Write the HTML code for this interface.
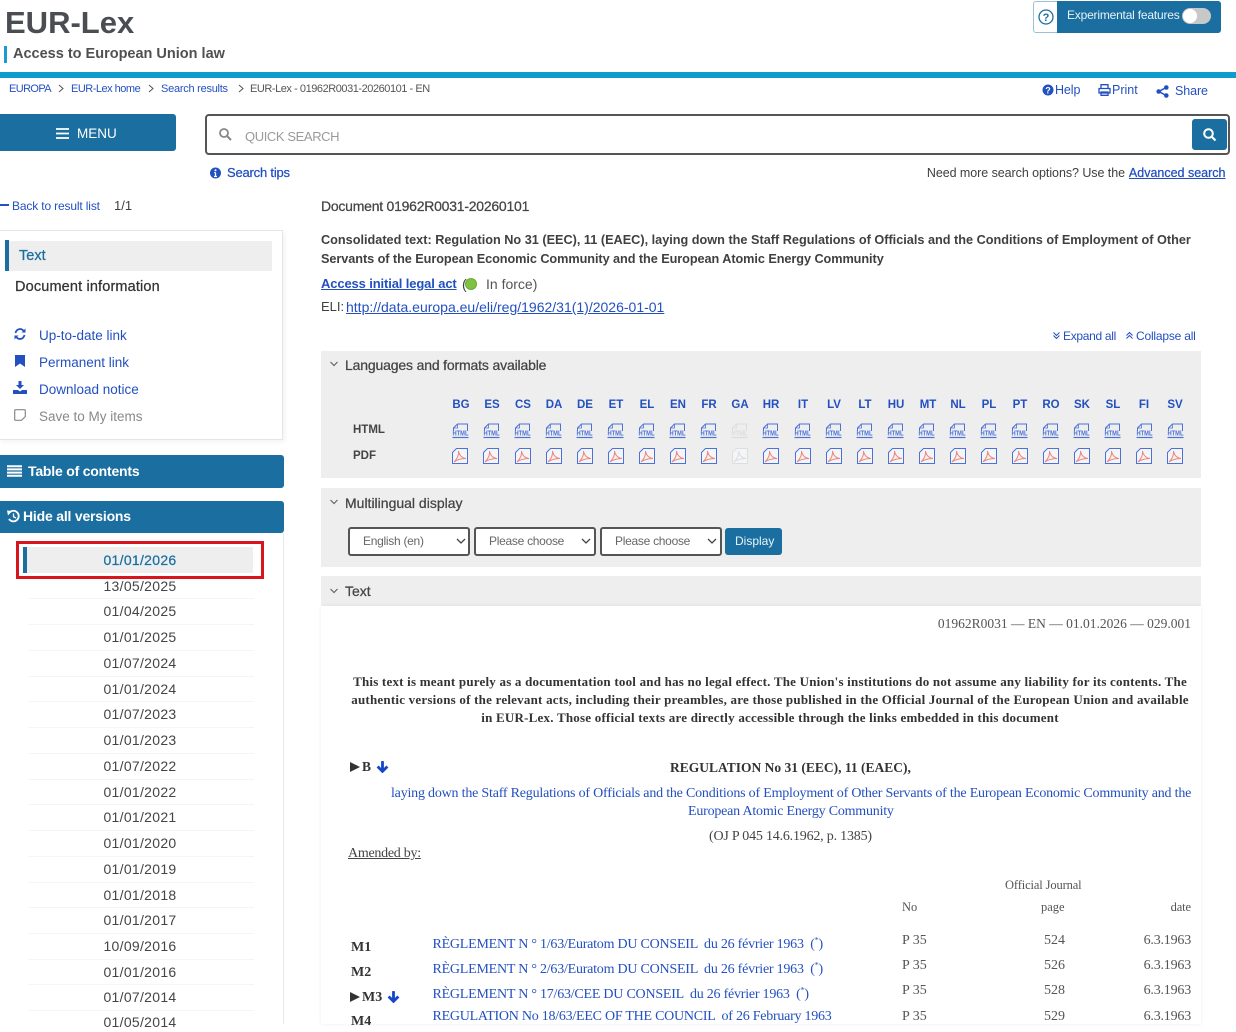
<!DOCTYPE html>
<html lang="en"><head><meta charset="utf-8"><title>EUR-Lex</title>
<style>
html,body{margin:0;padding:0;background:#fff}
body{width:1236px;height:1024px;overflow:hidden;position:relative;font-family:"Liberation Sans",sans-serif;color:#404040;font-size:14px}
.t{position:absolute;white-space:nowrap;line-height:20px}
.l{color:#2350c0}
.u{text-decoration:underline}
.b{font-weight:bold}
.m{-webkit-text-stroke:.25px currentColor}
.s{font-family:"Liberation Serif",serif}
.r{text-align:right}
.c{text-align:center}
.box{position:absolute;box-sizing:border-box}
svg{position:absolute;overflow:visible}
.teal{background:#1a6fa0;border-radius:3px}
.panel{background:#eeeeee;position:absolute;left:321px;width:880px}
.sel{position:absolute;top:527px;height:29px;width:122px;box-sizing:border-box;border:2px solid #555;border-radius:3px;background:#fff;color:#666;font-size:12px;line-height:25px;padding-left:13px;letter-spacing:-.28px}
.lg{position:absolute;top:395px;width:30px;text-align:center;color:#2350c0;font-size:11.5px;font-weight:bold;line-height:20px}
.d{position:absolute;left:27px;width:226px;text-align:center;font-size:14px;line-height:20px;letter-spacing:.3px;color:#444}
.hr{position:absolute;left:28px;width:226px;height:1px;background:#f5f5f5}
.rg{color:#2350c0;font-size:14px;letter-spacing:-.23px;left:432.500px}
.pc{font-size:14px;color:#555}
.dt{right:45px;letter-spacing:-.2px}
</style></head><body>
<svg width="0" height="0" style="position:absolute"><defs>
<symbol id="h" viewBox="0 0 17 16"><path d="M1.500 8V5L5.500 1H15.500V8" fill="none" stroke="currentColor" stroke-width="1"/><path d="M1.500 5H5.500V1" fill="none" stroke="currentColor" stroke-width=".8"/><text x="8.500" y="12.500" text-anchor="middle" font-family="Liberation Sans" font-size="7" font-weight="bold" fill="currentColor" textLength="16" lengthAdjust="spacingAndGlyphs">HTML</text><path d="M0.500 14.500H16.500" stroke="currentColor" stroke-width="1.200"/></symbol>
<symbol id="p" viewBox="0 0 16 16"><path d="M.5 4.500L4.500.5H15.500V15.500H.5Z" fill="#f4f5f8" stroke="currentColor" stroke-width="1"/><path d="M2 14C5 11 7 7 6.500 3C7.500 8 10 10 14 10.500C10 10.500 6 11 2 14Z" fill="none" stroke="var(--pc,#ee8878)" stroke-width="1"/></symbol>
<symbol id="ar" viewBox="0 0 12 12"><path d="M6 1V10M1.500 6L6 10.500L10.500 6" fill="none" stroke="#1448c8" stroke-width="2.600"/></symbol>
</defs></svg>

<div class="t b" style="left:5px;top:2px;font-size:31px;line-height:42px;color:#4a4d52">EUR-Lex</div>
<div class="box" style="left:4px;top:46px;width:3px;height:17px;background:#1c9ad6"></div>
<div class="t b" style="left:13px;top:44px;font-size:14.500px;color:#505050">Access to European Union law</div>
<div class="box" style="left:0;top:72px;width:1236px;height:6px;background:#0e9ccf"></div>

<div class="t l" style="left:9px;top:79px;font-size:11px;letter-spacing:-.6px">EUROPA</div>
<div class="t l" style="left:71px;top:79px;font-size:11px;letter-spacing:-.5px">EUR-Lex home</div>
<div class="t l" style="left:161px;top:79px;font-size:11px;letter-spacing:-.25px">Search results</div>
<div class="t" style="left:250px;top:79px;font-size:11px;color:#555;letter-spacing:-.45px">EUR-Lex - 01962R0031-20260101 - EN</div>
<svg style="left:0;top:0" width="300" height="100"><path d="M59 85L63 88.500L59 92M149 85L153 88.500L149 92M239 85L243 88.500L239 92" fill="none" stroke="#555" stroke-width="1"/></svg>

<!-- experimental -->
<div class="box" style="left:1033px;top:1px;width:188px;height:32px;border:1px solid #9cc0d6;border-radius:3px;background:#fff"></div>
<div class="box teal" style="left:1057px;top:1px;width:164px;height:32px;border-radius:0 3px 3px 0"></div>
<svg style="left:1037px;top:8px" width="18" height="18"><circle cx="9" cy="9" r="7" fill="none" stroke="#1a6fa0" stroke-width="1.300"/><text x="9" y="13" text-anchor="middle" font-size="11" font-weight="bold" fill="#1a6fa0" font-family="Liberation Sans">?</text></svg>
<div class="t" style="left:1067px;top:5px;font-size:12px;color:#e8f2f8;letter-spacing:-.2px">Experimental features</div>
<div class="box" style="left:1182px;top:8px;width:29px;height:16px;border-radius:8px;background:#c8c8c8"></div>
<div class="box" style="left:1183px;top:9px;width:14px;height:14px;border-radius:50%;background:#fff"></div>

<svg style="left:1042px;top:84px" width="12" height="12"><circle cx="6" cy="6" r="5.500" fill="#2350c0"/><text x="6" y="9.500" text-anchor="middle" font-size="9" font-weight="bold" fill="#fff" font-family="Liberation Sans">?</text></svg>
<div class="t l" style="left:1055px;top:80px;font-size:12.500px;letter-spacing:-.1px">Help</div>
<svg style="left:1098px;top:84px" width="13" height="12"><path d="M3 4V.7H10V4M1 4.500H12V9H1ZM3 8H10V11.300H3Z" fill="#fff" stroke="#2350c0" stroke-width="1.300"/></svg>
<div class="t l" style="left:1112px;top:80px;font-size:12.500px">Print</div>
<svg style="left:1156px;top:85px" width="13" height="13"><path d="M10 2.500L3 6.500L10 10.500" fill="none" stroke="#2350c0" stroke-width="1.500"/><circle cx="10.300" cy="2.500" r="2.300" fill="#2350c0"/><circle cx="2.700" cy="6.500" r="2.300" fill="#2350c0"/><circle cx="10.300" cy="10.500" r="2.300" fill="#2350c0"/></svg>
<div class="t l" style="left:1175px;top:81px;font-size:12.500px;letter-spacing:-.1px">Share</div>

<!-- menu & search -->
<div class="box teal" style="left:-4px;top:114px;width:180px;height:37px"></div>
<svg style="left:56px;top:128px" width="13" height="11"><path d="M0 1H13M0 5.500H13M0 10H13" stroke="#fff" stroke-width="1.800"/></svg>
<div class="t" style="left:77px;top:124px;font-size:13.500px;color:#fff">MENU</div>
<div class="box" style="left:205px;top:114px;width:1025px;height:41px;border:2px solid #555;border-radius:4px;background:#fff"></div>
<svg style="left:219px;top:128px" width="13" height="13"><circle cx="5" cy="5" r="4" fill="none" stroke="#888" stroke-width="1.800"/><path d="M8 8L12 12" stroke="#888" stroke-width="2"/></svg>
<div class="t" style="left:245px;top:127px;font-size:13px;color:#9a9a9a;letter-spacing:-.4px">QUICK SEARCH</div>
<div class="box teal" style="left:1192px;top:119px;width:35px;height:31px"></div>
<svg style="left:1203px;top:128px" width="14" height="14"><circle cx="5.500" cy="5.500" r="4.300" fill="none" stroke="#fff" stroke-width="2"/><path d="M8.500 8.500L12.500 12.500" stroke="#fff" stroke-width="2.200"/></svg>

<svg style="left:210px;top:167px" width="12" height="12"><circle cx="5.500" cy="6" r="5.500" fill="#2350c0"/><path d="M5.500 5.500V9.500M4 9.500H7M4.200 5.500H5.500" stroke="#fff" stroke-width="1.300"/><circle cx="5.500" cy="3.300" r="1" fill="#fff"/></svg>
<div class="t l m" style="left:227px;top:163px;font-size:13px;letter-spacing:-.2px">Search tips</div>
<div class="t r" style="right:111px;top:163px;font-size:12.500px;letter-spacing:-.06px">Need more search options? Use the</div>
<div class="t l u m" style="right:10.500px;top:163px;font-size:12.500px">Advanced search</div>

<div class="box" style="left:0;top:204px;width:9px;height:2px;background:#2350c0"></div>
<div class="t l" style="left:12px;top:196px;font-size:12px;letter-spacing:-.15px">Back to result list</div>
<div class="t" style="left:114px;top:196px;font-size:13px">1/1</div>

<!-- left card -->
<div class="box" style="left:-2px;top:230px;width:285px;height:210px;border:1px solid #e6e6e6;box-shadow:2px 2px 5px rgba(0,0,0,.05);background:#fff"></div>
<div class="box" style="left:5px;top:241px;width:267px;height:30px;background:#eeeeee"></div>
<div class="box" style="left:5px;top:240px;width:4px;height:31px;background:#1a6fa0"></div>
<div class="t m" style="left:19px;top:246px;font-size:14.500px;color:#1a6fa0">Text</div>
<div class="t m" style="left:15px;top:277px;font-size:14.500px;color:#333;letter-spacing:.15px">Document information</div>
<svg style="left:14px;top:328px" width="12" height="12"><path d="M1.500 5C2 2.500 4 1 6 1C7.500 1 9 2 10 3.200M10.500 7C10 9.500 8 11 6 11C4.500 11 3 10 2 8.800" fill="none" stroke="#2350c0" stroke-width="1.800"/><path d="M11.500 .5V4.500H7.500ZM.5 11.500V7.500H4.500Z" fill="#2350c0"/></svg>
<div class="t l" style="left:39px;top:326px;font-size:13.500px">Up-to-date link</div>
<svg style="left:15px;top:355px" width="10" height="12"><path d="M0 0H10V12L5 8.500L0 12Z" fill="#2350c0"/></svg>
<div class="t l" style="left:39px;top:353px;font-size:13.500px">Permanent link</div>
<svg style="left:13px;top:381px" width="14" height="13"><path d="M5.500 0H8.500V4H11L7 8L3 4H5.500Z" fill="#2350c0"/><path d="M0 9H5L7 10.500L9 9H14V13H0Z" fill="#2350c0"/></svg>
<div class="t l" style="left:39px;top:380px;font-size:13.500px">Download notice</div>
<svg style="left:14px;top:409px" width="12" height="12"><path d="M1.500.7H10.500Q11.300.7 11.300 1.500V7.500L7.500 11.300H1.500Q.7 11.300.7 10.500V1.500Q.7.7 1.500.7Z" fill="none" stroke="#888" stroke-width="1.200"/></svg>
<div class="t" style="left:39px;top:407px;font-size:13.500px;color:#888">Save to My items</div>

<div class="box teal" style="left:-4px;top:455px;width:288px;height:33px"></div>
<svg style="left:7px;top:465px" width="15" height="12"><path d="M0 1.200H15M0 4.400H15M0 7.600H15M0 10.800H15" stroke="#fff" stroke-width="2"/></svg>
<div class="t b" style="left:28px;top:461px;font-size:14px;color:#fff;letter-spacing:-.2px">Table of contents</div>
<div class="box teal" style="left:-4px;top:501px;width:288px;height:32px"></div>
<svg style="left:7px;top:510px" width="13" height="13"><path d="M2.500 2.500A5.300 5.300 0 1 1 2 9" fill="none" stroke="#fff" stroke-width="1.800"/><path d="M0 0.500L5 1L1 5.500Z" fill="#fff"/><path d="M6.500 3.500V6.700L9 8" fill="none" stroke="#fff" stroke-width="1.300"/></svg>
<div class="t b" style="left:23px;top:506px;font-size:14px;color:#fff;letter-spacing:-.2px">Hide all versions</div>

<!-- versions -->
<div class="box" style="left:283px;top:533px;width:1px;height:491px;background:#e8e8e8"></div>
<div class="box" style="left:23px;top:547px;width:230px;height:26px;background:#eeeeee"></div>
<div class="box" style="left:23px;top:547px;width:4px;height:26px;background:#1a6fa0"></div>
<div class="box" style="left:16px;top:541px;width:248px;height:38px;border:3px solid #d8141c"></div>
<div class="d m" style="top:550px;color:#1a6fa0">01/01/2026</div>
<div class="d" style="top:576px">13/05/2025</div>
<div class="d" style="top:601px">01/04/2025</div>
<div class="d" style="top:627px">01/01/2025</div>
<div class="d" style="top:653px">01/07/2024</div>
<div class="d" style="top:679px">01/01/2024</div>
<div class="d" style="top:704px">01/07/2023</div>
<div class="d" style="top:730px">01/01/2023</div>
<div class="d" style="top:756px">01/07/2022</div>
<div class="d" style="top:782px">01/01/2022</div>
<div class="d" style="top:807px">01/01/2021</div>
<div class="d" style="top:833px">01/01/2020</div>
<div class="d" style="top:859px">01/01/2019</div>
<div class="d" style="top:885px">01/01/2018</div>
<div class="d" style="top:910px">01/01/2017</div>
<div class="d" style="top:936px">10/09/2016</div>
<div class="d" style="top:962px">01/01/2016</div>
<div class="d" style="top:987px">01/07/2014</div>
<div class="d" style="top:1012px">01/05/2014</div>
<div class="hr" style="top:598px"></div><div class="hr" style="top:624px"></div><div class="hr" style="top:650px"></div><div class="hr" style="top:676px"></div><div class="hr" style="top:701px"></div><div class="hr" style="top:727px"></div><div class="hr" style="top:753px"></div><div class="hr" style="top:779px"></div><div class="hr" style="top:804px"></div><div class="hr" style="top:830px"></div><div class="hr" style="top:856px"></div><div class="hr" style="top:882px"></div><div class="hr" style="top:907px"></div><div class="hr" style="top:933px"></div><div class="hr" style="top:959px"></div><div class="hr" style="top:984px"></div><div class="hr" style="top:1010px"></div>

<!-- main head -->
<div class="t m" style="left:321px;top:196px;font-size:14px;color:#444;letter-spacing:-.24px">Document 01962R0031-20260101</div>
<div class="t b" style="left:321px;top:230px;font-size:12.700px;color:#404040">Consolidated text: Regulation No 31 (EEC), 11 (EAEC), laying down the Staff Regulations of Officials and the Conditions of Employment of Other</div>
<div class="t b" style="left:321px;top:249px;font-size:12.700px;color:#404040;letter-spacing:-.06px">Servants of the European Economic Community and the European Atomic Energy Community</div>
<div class="t l u b" style="left:321px;top:274px;font-size:13px;letter-spacing:-.13px">Access initial legal act</div>
<div class="t" style="left:462px;top:274px;font-size:14px">(</div>
<div class="box" style="left:466px;top:279px;width:10px;height:10px;border-radius:50%;background:#7fc241;box-shadow:0 0 0 1px #6aa93a"></div>
<div class="t" style="left:486px;top:274px;font-size:14px;color:#555">In force)</div>
<div class="t" style="left:321px;top:297px;font-size:13px">ELI:</div>
<div class="t l u" style="left:346px;top:297px;font-size:14px">http://data.europa.eu/eli/reg/1962/31(1)/2026-01-01</div>
<svg style="left:1053px;top:331px" width="150" height="10"><path d="M.5 1.500L3.500 4.500L6.500 1.500M.5 4.500L3.500 7.500L6.500 4.500M73.500 4.500L76.500 1.500L79.500 4.500M73.500 7.500L76.500 4.500L79.500 7.500" fill="none" stroke="#2350c0" stroke-width="1"/></svg>
<div class="t l" style="left:1063px;top:326px;font-size:12px;letter-spacing:-.3px">Expand all</div>
<div class="t l" style="left:1136px;top:326px;font-size:12px;letter-spacing:-.2px">Collapse all</div>

<!-- panels -->
<div class="panel" style="top:351px;height:127px"></div>
<div class="panel" style="top:488px;height:79px"></div>
<div class="panel" style="top:576px;height:30px"></div>
<div class="box" style="left:321px;top:606px;width:880px;height:418px;box-shadow:0 0 4px rgba(0,0,0,.07);background:#fff"></div>
<svg style="left:330px;top:360px" width="10" height="240"><path d="M.5 2L4 5.500L7.500 2M.5 140L4 143.500L7.500 140M.5 229L4 232.500L7.500 229" fill="none" stroke="#666" stroke-width="1.200"/></svg>
<div class="t m" style="left:345px;top:355px;font-size:14px;color:#444;letter-spacing:-.16px">Languages and formats available</div>
<div class="t m" style="left:345px;top:493px;font-size:14px;color:#444">Multilingual display</div>
<div class="t m" style="left:345px;top:581px;font-size:14px;color:#444">Text</div>

<div class="lg" style="left:446px">BG</div><div class="lg" style="left:477px">ES</div><div class="lg" style="left:508px">CS</div><div class="lg" style="left:539px">DA</div><div class="lg" style="left:570px">DE</div><div class="lg" style="left:601px">ET</div><div class="lg" style="left:632px">EL</div><div class="lg" style="left:663px">EN</div><div class="lg" style="left:694px">FR</div><div class="lg" style="left:725px">GA</div><div class="lg" style="left:756px">HR</div><div class="lg" style="left:788px">IT</div><div class="lg" style="left:819px">LV</div><div class="lg" style="left:850px">LT</div><div class="lg" style="left:881px">HU</div><div class="lg" style="left:913px">MT</div><div class="lg" style="left:943px">NL</div><div class="lg" style="left:974px">PL</div><div class="lg" style="left:1005px">PT</div><div class="lg" style="left:1036px">RO</div><div class="lg" style="left:1067px">SK</div><div class="lg" style="left:1098px">SL</div><div class="lg" style="left:1129px">FI</div><div class="lg" style="left:1160px">SV</div>
<div class="t b" style="left:353px;top:420px;font-size:11.500px;color:#444">HTML</div>
<div class="t b" style="left:353px;top:446px;font-size:11.500px;color:#444">PDF</div>

<svg style="left:0;top:0;color:#4c72d8" width="1236" height="480">
<use href="#h" x="452" y="423" width="17" height="16"/><use href="#h" x="483" y="423" width="17" height="16"/><use href="#h" x="514" y="423" width="17" height="16"/><use href="#h" x="545" y="423" width="17" height="16"/><use href="#h" x="576" y="423" width="17" height="16"/><use href="#h" x="607" y="423" width="17" height="16"/><use href="#h" x="638" y="423" width="17" height="16"/><use href="#h" x="669" y="423" width="17" height="16"/><use href="#h" x="700" y="423" width="17" height="16"/><use href="#h" x="731" y="423" width="17" height="16" style="color:#dcdcdc"/><use href="#h" x="762" y="423" width="17" height="16"/><use href="#h" x="794" y="423" width="17" height="16"/><use href="#h" x="825" y="423" width="17" height="16"/><use href="#h" x="856" y="423" width="17" height="16"/><use href="#h" x="887" y="423" width="17" height="16"/><use href="#h" x="918" y="423" width="17" height="16"/><use href="#h" x="949" y="423" width="17" height="16"/><use href="#h" x="980" y="423" width="17" height="16"/><use href="#h" x="1011" y="423" width="17" height="16"/><use href="#h" x="1042" y="423" width="17" height="16"/><use href="#h" x="1073" y="423" width="17" height="16"/><use href="#h" x="1104" y="423" width="17" height="16"/><use href="#h" x="1136" y="423" width="17" height="16"/><use href="#h" x="1167" y="423" width="17" height="16"/>
<use href="#p" x="452" y="448" width="16" height="16"/><use href="#p" x="483" y="448" width="16" height="16"/><use href="#p" x="515" y="448" width="16" height="16"/><use href="#p" x="546" y="448" width="16" height="16"/><use href="#p" x="577" y="448" width="16" height="16"/><use href="#p" x="608" y="448" width="16" height="16"/><use href="#p" x="639" y="448" width="16" height="16"/><use href="#p" x="670" y="448" width="16" height="16"/><use href="#p" x="701" y="448" width="16" height="16"/><use href="#p" x="732" y="448" width="16" height="16" style="color:#dedede;--pc:#dedede"/><use href="#p" x="763" y="448" width="16" height="16"/><use href="#p" x="795" y="448" width="16" height="16"/><use href="#p" x="826" y="448" width="16" height="16"/><use href="#p" x="857" y="448" width="16" height="16"/><use href="#p" x="888" y="448" width="16" height="16"/><use href="#p" x="919" y="448" width="16" height="16"/><use href="#p" x="950" y="448" width="16" height="16"/><use href="#p" x="981" y="448" width="16" height="16"/><use href="#p" x="1012" y="448" width="16" height="16"/><use href="#p" x="1043" y="448" width="16" height="16"/><use href="#p" x="1074" y="448" width="16" height="16"/><use href="#p" x="1105" y="448" width="16" height="16"/><use href="#p" x="1136" y="448" width="16" height="16"/><use href="#p" x="1167" y="448" width="16" height="16"/>
</svg>

<div class="sel" style="left:348px">English (en)</div>
<div class="sel" style="left:474px">Please choose</div>
<div class="sel" style="left:600px">Please choose</div>
<svg style="left:0;top:0" width="800" height="560"><path d="M457 539L461 543L465 539M582 539L586 543L590 539M708 539L712 543L716 539" fill="none" stroke="#444" stroke-width="1.300"/></svg>
<div class="box teal" style="left:725px;top:528px;width:57px;height:27px"></div>
<div class="t" style="left:735px;top:531px;font-size:12px;color:#eaf3f8">Display</div>

<!-- document -->
<div class="t s r" style="right:45px;top:614px;font-size:13.500px;color:#555">01962R0031 — EN — 01.01.2026 — 029.001</div>
<div class="t s b c" style="left:345px;width:850px;top:672px;font-size:13px;color:#333;letter-spacing:.21px">This text is meant purely as a documentation tool and has no legal effect. The Union's institutions do not assume any liability for its contents. The</div>
<div class="t s b c" style="left:345px;width:850px;top:690px;font-size:13px;color:#333;letter-spacing:.22px">authentic versions of the relevant acts, including their preambles, are those published in the Official Journal of the European Union and available</div>
<div class="t s b c" style="left:345px;width:850px;top:708px;font-size:13px;color:#333;letter-spacing:.22px">in EUR-Lex. Those official texts are directly accessible through the links embedded in this document</div>

<svg style="left:350px;top:762px" width="10" height="10"><path d="M0 0L10 5L0 10Z" fill="#333"/></svg>
<div class="t s b" style="left:362px;top:757px;font-size:13.500px;color:#333">B</div>
<svg style="left:376px;top:760px" width="13" height="13"><use href="#ar" width="13" height="13"/></svg>
<div class="t s b" style="left:670px;top:758px;font-size:13.500px;color:#333">REGULATION No 31 (EEC), 11 (EAEC),</div>
<div class="t s" style="left:391px;top:784px;font-size:14px;color:#2350c0;letter-spacing:-.205px">laying down the Staff Regulations of Officials and the Conditions of Employment of Other Servants of the European Economic Community and the</div>
<div class="t s" style="left:688px;top:802px;font-size:14px;color:#2350c0;letter-spacing:-.21px">European Atomic Energy Community</div>
<div class="t s" style="left:709px;top:827px;font-size:14px;color:#444;letter-spacing:-.2px">(OJ P 045 14.6.1962, p. 1385)</div>
<div class="t s u" style="left:348px;top:844px;font-size:14px;color:#444;letter-spacing:-.27px">Amended by:</div>

<div class="t s" style="left:1005px;top:875px;font-size:12.500px;color:#555;letter-spacing:-.13px">Official Journal</div>
<div class="t s" style="left:902px;top:897px;font-size:12.500px;color:#555">No</div>
<div class="t s" style="left:1041px;top:897px;font-size:12.500px;color:#555">page</div>
<div class="t s r" style="right:45px;top:897px;font-size:12.500px;color:#555;letter-spacing:-.1px">date</div>

<div class="t s b" style="left:351px;top:938px;font-size:14px;color:#333">M1</div>
<div class="t s b" style="left:351px;top:963px;font-size:14px;color:#333">M2</div>
<svg style="left:350px;top:992px" width="10" height="10"><path d="M0 0L10 5L0 10Z" fill="#333"/></svg>
<div class="t s b" style="left:362px;top:988px;font-size:14px;color:#333">M3</div>
<svg style="left:387px;top:990px" width="13" height="13"><use href="#ar" width="13" height="13"/></svg>
<div class="t s b" style="left:351px;top:1012px;font-size:14px;color:#333">M4</div>

<div class="t s rg" style="top:935px">RÈGLEMENT N ° 1/63/Euratom DU CONSEIL &nbsp;du 26 février 1963 &nbsp;(<sup style="font-size:8px;line-height:0">*</sup>)</div>
<div class="t s rg" style="top:960px">RÈGLEMENT N ° 2/63/Euratom DU CONSEIL &nbsp;du 26 février 1963 &nbsp;(<sup style="font-size:8px;line-height:0">*</sup>)</div>
<div class="t s rg" style="top:985px">RÈGLEMENT N ° 17/63/CEE DU CONSEIL &nbsp;du 26 février 1963 &nbsp;(<sup style="font-size:8px;line-height:0">*</sup>)</div>
<div class="t s rg" style="top:1007px;letter-spacing:-.25px">REGULATION No 18/63/EEC OF THE COUNCIL &nbsp;of 26 February 1963</div>

<div class="t s pc" style="left:902px;top:931px">P 35</div><div class="t s pc" style="left:1044px;top:931px">524</div><div class="t s r pc dt" style="top:931px">6.3.1963</div>
<div class="t s pc" style="left:902px;top:956px">P 35</div><div class="t s pc" style="left:1044px;top:956px">526</div><div class="t s r pc dt" style="top:956px">6.3.1963</div>
<div class="t s pc" style="left:902px;top:981px">P 35</div><div class="t s pc" style="left:1044px;top:981px">528</div><div class="t s r pc dt" style="top:981px">6.3.1963</div>
<div class="t s pc" style="left:902px;top:1007px">P 35</div><div class="t s pc" style="left:1044px;top:1007px">529</div><div class="t s r pc dt" style="top:1007px">6.3.1963</div>
</body></html>
